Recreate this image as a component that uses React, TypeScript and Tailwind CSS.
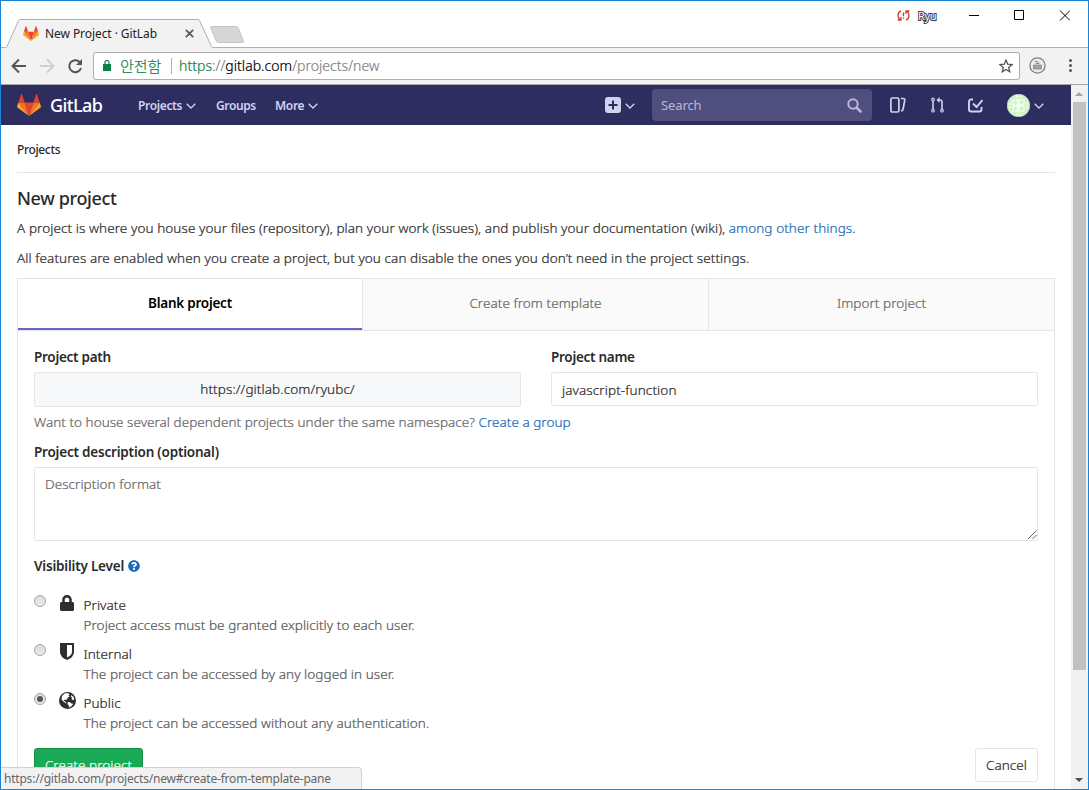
import React from "react";
import { FaLock, FaQuestionCircle } from "react-icons/fa";

function Tanuki({ className }: { className: string }) {
  return (
    <svg className={className} viewBox="0 0 36 33" preserveAspectRatio="none">
      <path fill="#e24329" d="M18 33 11.4 12.7h13.2z" />
      <path fill="#fc6d26" d="M18 33 11.4 12.7H2z" />
      <path fill="#fca326" d="M2 12.7.1 18.8c-.2.6 0 1.2.5 1.5L18 33z" />
      <path fill="#e24329" d="M2 12.7h9.4L7.4.5c-.2-.7-1.1-.7-1.3 0z" />
      <path fill="#fc6d26" d="m18 33 6.6-20.3H34z" />
      <path fill="#fca326" d="m34 12.7 1.9 6.1c.2.6 0 1.2-.5 1.5L18 33z" />
      <path fill="#e24329" d="M34 12.7h-9.4l4-12.2c.2-.7 1.1-.7 1.3 0z" />
    </svg>
  );
}

function Chevron() {
  return (
    <svg className="h-[6px] w-[10px] shrink-0" viewBox="0 0 10 6" fill="none" stroke="#d1d1f0" strokeWidth="1.3">
      <path d="M.7.7 5 5 9.3.7" />
    </svg>
  );
}

function TabStrip() {
  return (
    <div className="relative flex h-[46px] shrink-0 bg-white">
      <svg className="absolute left-0 top-0 h-[47px] w-[1087px]" viewBox="1 1 1087 47">
        <path d="M1 47.5H5.500Q6.500 47.500 7 46.500L18.500 20.500Q19 19.500 20 19.500H198Q199 19.500 199.500 20.500L211.500 46.500Q212 47.500 213 47.500H1088V49H1Z" fill="#f2f2f2" />
        <path d="M1 47.500H5.500Q6.500 47.500 7 46.500L18.500 20.500Q19 19.500 20 19.500H198Q199 19.500 199.500 20.500L211.500 46.500Q212 47.500 213 47.500H1088" fill="none" stroke="#b0b0b0" />
        <path d="M211.500 26.500H236Q237.500 26.500 238.200 28L243.500 41Q244 42.500 242.500 42.500H218.500Q217 42.500 216.400 41.200L210.700 28Q210 26.500 211.500 26.500Z" fill="#d6d6d6" stroke="#c4c4c4" />
      </svg>
      <div className="relative flex w-[210px] items-center pl-[22px] pt-[19px]">
        <Tanuki className="h-[15px] w-[16px]" />
        <span className="ml-[6px] w-[113px] whitespace-nowrap font-['Noto_Sans'] text-[12px] leading-4 tracking-[-.07px] text-[#222]">New Project · GitLab</span>
        <svg className="ml-[27px] size-[9px]" viewBox="0 0 9 9" stroke="#5a5a5a" strokeWidth="1.8"><path d="m.8.8 7.400 7.400M8.200.8.800 8.200" /></svg>
      </div>
      <div className="relative ml-auto flex h-[28px] items-center pr-[18px]">
        <svg className="mr-[-1px] h-[11px] w-[13px]" viewBox="0 0 13 11" fill="none" stroke="#c93a2b" strokeWidth="1.300">
          <path d="M4 .8C.2 2.300.2 7.500 3 9.700M.7 10H4V7M9 10.200c3.800-1.500 3.800-6.700 1-8.900M12.300 1H9v3" />
          <path d="M6.500 2.500v3.800M6.500 7.500v1.300" />
        </svg>
        <span className="ml-[9px] w-[20px] pt-[2px] font-['Noto_Sans'] text-[11px] leading-4 tracking-[-.3px] text-white [-webkit-text-stroke:2px_#444] [paint-order:stroke_fill]">Ryu</span>
        <svg className="ml-[31px] h-[11px] w-[101px]" viewBox="0 0 101 11" fill="none" stroke="#000">
          <path d="M0 5.500h10M45.500.5h9v9h-9zM91 .5l10 10M101 .5l-10 10" />
        </svg>
      </div>
    </div>
  );
}

function Toolbar() {
  return (
    <div className="flex h-[38px] shrink-0 items-center border-b border-[#a6a6a6] bg-[#f2f2f2]">
      <svg className="ml-[10px] h-[18px] w-[74px]" viewBox="0 0 74 18" fill="none" strokeWidth="2">
        <path d="M15 9H2M8 2.500 1.500 9 8 15.500" stroke="#555" />
        <path d="M29 9h13M36 2.500 42.500 9 36 15.500" stroke="#d0d0d0" />
        <path d="M68.800 5.200A6 6 0 1 0 70 11" stroke="#555" />
        <path d="M71 2v6h-6z" fill="#555" />
      </svg>
      <div className="ml-[8px] flex h-[28px] w-[927px] items-center rounded-[3px] border border-[#adadad] bg-white">
        <svg className="ml-[9px] h-[11px] w-[8px]" viewBox="0 0 8 11"><path d="M0 4h8v7H0z" fill="#0b8043" /><path d="M2 4V2.500a2 2 0 0 1 4 0V4" fill="none" stroke="#0b8043" strokeWidth="1.200" /></svg>
        <span className="ml-[9px] w-[42px] whitespace-nowrap font-['Noto_Sans_CJK_KR'] text-[15px] font-light leading-5 text-[#0b8043] [-webkit-text-stroke:.2px]">안전함</span>
        <span className="ml-[9px] h-[16px] w-px bg-[#b0b0b0]" />
        <span className="ml-[7px] whitespace-nowrap font-['Noto_Sans'] text-[14px] font-light leading-5 tracking-[.04px] text-[#808080] [-webkit-text-stroke:.2px]">
          <span className="text-[#0b8043]">https</span>://<span className="text-black">gitlab.com</span>/projects/new
        </span>
        <svg className="ml-auto mr-[6px] size-[14px]" viewBox="0 0 14 14" fill="none" stroke="#555" strokeWidth="1.300"><path d="m7 1 1.700 4.200 4.500.3-3.500 2.900 1.100 4.400L7 10.400l-3.800 2.400 1.100-4.400L.8 5.500l4.500-.3z" /></svg>
      </div>
      <svg className="ml-[9px] size-[17px]" viewBox="0 0 17 17" fill="none" stroke="#808080">
        <circle cx="8.500" cy="8.500" r="7.600" strokeWidth="1.300" fill="#ececec" />
        <path d="M6 4.500h2.500l1 1.500M6.500 6.500h4" strokeWidth=".9" />
        <path d="M4.500 8h8v4h-8z" fill="#a5a5a5" strokeWidth=".7" />
      </svg>
      <svg className="ml-[23px] h-[13px] w-[3px]" viewBox="0 0 3 13" fill="#555"><circle cx="1.500" cy="1.600" r="1.500" /><circle cx="1.500" cy="6.500" r="1.500" /><circle cx="1.500" cy="11.400" r="1.500" /></svg>
    </div>
  );
}

function Navbar() {
  return (
    <nav className="flex h-[40px] shrink-0 items-center bg-[#2e2d60] font-['Noto_Sans'] text-[12px] font-semibold tracking-[-.1px] text-[#d1d1f0]">
      <Tanuki className="ml-[16px] h-[22px] w-[24px]" />
      <span className="ml-[9px] w-[53px] whitespace-nowrap text-[18px] font-medium leading-6 tracking-[-.6px] text-white">GitLab</span>
      <span className="ml-[35px] w-[44px] whitespace-nowrap pt-[2px] tracking-[-.35px]">Projects</span>
      <span className="ml-[4px] flex pt-[1px]"><Chevron /></span>
      <span className="ml-[20px] w-[40px] whitespace-nowrap pt-[2px] tracking-[-.4px]">Groups</span>
      <span className="ml-[19px] w-[30px] whitespace-nowrap pt-[2px] tracking-[-.3px]">More</span>
      <span className="ml-[3px] flex pt-[1px]"><Chevron /></span>
      <div className="ml-auto flex items-center pr-[27px]">
        <svg className="size-[16px]" viewBox="0 0 16 16"><rect width="16" height="16" rx="3" fill="#d1d1f0" /><path d="M8 3.500v9M3.500 8h9" stroke="#2e2d60" strokeWidth="2" /></svg>
        <span className="ml-[4px] mr-[1px] flex pt-[1px]"><Chevron /></span>
        <div className="ml-[16px] flex h-[32px] w-[220px] items-center justify-between rounded-[4px] bg-[#4f4e7d] pl-[9px] pr-[10px] text-[13px] font-normal text-[#b9b8dc]">
          <span className="pt-[2px]">Search</span>
          <svg className="size-[15px]" viewBox="0 0 15 15" fill="none" stroke="#b9b8dc"><circle cx="6" cy="6" r="4.700" strokeWidth="2" /><path d="m9.600 9.600 3.900 3.900" strokeWidth="2.600" strokeLinecap="round" /></svg>
        </div>
        <svg className="ml-[18px] h-[16px] w-[16px]" viewBox="0 0 16 16" fill="none" stroke="#d1d1f0" strokeWidth="1.700">
          <rect x=".9" y="1" width="8" height="14" rx="1.500" />
          <path d="M11 1.500h2.500a1.300 1.300 0 0 1 1.300 1.500L13 12.500q-.3 1.300-2 1.300" />
        </svg>
        <svg className="ml-[25px] h-[16px] w-[13px]" viewBox="0 0 13 16" fill="none" stroke="#d1d1f0" strokeWidth="1.200">
          <circle cx="2" cy="2.500" r="1.300" /><circle cx="2" cy="13.700" r="1.300" /><circle cx="11" cy="13.700" r="1.300" />
          <path d="M2 4v8.500M11 12.500V5q0-2-2-2H7.500" strokeWidth="1.600" /><path d="M8.500 0v6L5.500 3z" fill="#d1d1f0" stroke="none" />
        </svg>
        <svg className="ml-[24px] h-[15px] w-[15px]" viewBox="0 0 15 15" fill="none" stroke="#d1d1f0" strokeWidth="1.900">
          <path d="M5 1.500H3A2 2 0 0 0 1 3.500v8a2 2 0 0 0 2 2h8.500a2 2 0 0 0 2-2V9M5 5.500l3.500 3.500L14.500 2" />
        </svg>
        <svg className="ml-[24px] size-[23px]" viewBox="0 0 23 23">
          <circle cx="11.500" cy="11.500" r="11.300" fill="#cdf6c2" stroke="#d1d1f0" strokeWidth=".7" />
          <path d="M11.500 6v11M6 11.500h11" stroke="#fff" strokeWidth="3" strokeDasharray="2.200 1" />
          <path d="M6 6h11v11H6zM3 9v5M20 9v5M9 2.500h5M9 20.500h5" fill="none" stroke="#f4fef0" strokeWidth="1.800" strokeDasharray="2 1.200" />
        </svg>
        <span className="ml-[4px] flex pt-[1px]"><Chevron /></span>
      </div>
    </nav>
  );
}

function Globe() {
  return (
    <svg className="size-[17px]" viewBox="0 0 17 17">
      <circle cx="8.500" cy="8.500" r="8.500" fill="#2e2e2e" />
      <path d="M5.500 1.500 9 .900l1.500 1.500-1 .8 1.200 1.200-1.700 1.200L7.500 8 5.800 7.500l-1 1.200 2.200 1.300.3 1.500-2.300-1.500L2.500 7.500 3 4zM12.500 3l2 2 .8 2.200-1.300 1-1.500-1.200.5-1.500-1.200-1zM9 10l2 .2 1.500 1.300 1.700.3-1.500 2.200-2.500 1.500-.7-2.500L8.300 12z" fill="#fff" />
    </svg>
  );
}

function Radio({ checked }: { checked?: boolean }) {
  return (
    <span className="flex size-[12px] shrink-0 items-center justify-center rounded-full border border-[#a3a3a3] bg-linear-to-b from-[#dadada] to-[#ededed]">
      {checked && <span className="size-[6px] rounded-full bg-[#555]" />}
    </span>
  );
}

function Level({ icon, name, text, checked }: { icon: React.ReactNode; name: string; text: string; checked?: boolean }) {
  return (
    <div className="flex h-[49px]">
      <Radio checked={checked} />
      <span className="-mt-[1px] ml-[11px] flex h-[17px] w-[20px] shrink-0 items-center justify-center text-[#2e2e2e]">{icon}</span>
      <div className="ml-[6.500px] whitespace-nowrap leading-5">
        <div>{name}</div>
        <div className="text-[#585858]">{text}</div>
      </div>
    </div>
  );
}

function Page() {
  return (
    <main className="flex min-h-0 flex-1 flex-col bg-white px-[16px] font-['Noto_Sans'] text-[13.5px] font-light leading-5 tracking-[.055px] text-[#2a2a2a] [-webkit-text-stroke:.22px]">
      <div className="flex h-[48px] shrink-0 items-center border-b border-[#e5e5e5] pt-[2px] text-[12px] font-medium tracking-[-.35px] [-webkit-text-stroke:0]">Projects</div>
      <h1 className="mt-[13px] h-[24px] shrink-0 text-[18px] font-medium leading-6 tracking-[-.35px] [-webkit-text-stroke:0]">New project</h1>
      <p className="mt-[8px] h-[20px] shrink-0 whitespace-nowrap tracking-[.085px]">
        A project is where you house your files (repository), plan your work (issues), and publish your documentation (wiki), <a className="text-[#1b69b6]">among other things</a>.
      </p>
      <p className="mt-[10px] h-[20px] shrink-0 whitespace-nowrap tracking-[.08px]">
        All features are enabled when you create a project, but you can disable the ones you don’t need in the project settings.
      </p>
      <div className="mt-[10px] flex h-[53px] shrink-0 border border-[#e5e5e5] text-center leading-[49px] text-[#666]">
        <div className="w-[344px] border-b-2 border-[#6666c4] font-semibold tracking-[-.25px] text-black [-webkit-text-stroke:0]">Blank project</div>
        <div className="w-[347px] border-x border-[#e5e5e5] bg-[#fafafa]">Create from template</div>
        <div className="flex-1 bg-[#fafafa]">Import project</div>
      </div>
      <form className="flex flex-1 flex-col border-x border-[#e5e5e5] px-[16px]">
        <div className="flex gap-[30px]">
          <div className="w-[487px]">
            <div className="mt-[16px] font-semibold tracking-[-.28px] [-webkit-text-stroke:0]">Project path</div>
            <div className="mt-[5px] h-[35px] rounded-[2px] border border-[#e5e5e5] bg-[#f7f8fa] text-center leading-[33px] tracking-[.1px]">https://gitlab.com/ryubc/</div>
          </div>
          <div className="w-[487px]">
            <div className="mt-[16px] font-semibold tracking-[-.28px] [-webkit-text-stroke:0]">Project name</div>
            <div className="mt-[5px] h-[34px] rounded-[2px] border border-[#e5e5e5] pl-[10px] leading-[34px] tracking-[.1px]">javascript-function</div>
          </div>
        </div>
        <div className="mt-[5px] whitespace-nowrap tracking-[.03px] text-[#666]">Want to house several dependent projects under the same namespace? <a className="text-[#1b69b6]">Create a group</a></div>
        <div className="mt-[10px] font-semibold tracking-[-.2px] [-webkit-text-stroke:0]">Project description (optional)</div>
        <div className="mt-[5px] flex h-[74px] shrink-0 items-start justify-between rounded-[2px] border border-[#e5e5e5] pl-[10px] pt-[6px] text-[#666]">
          Description format
          <svg className="mt-[56px] size-[9px]" viewBox="0 0 9 9" stroke="#555" strokeWidth=".9"><path d="m0 9 8.500-8.500M4.500 9l4-4" /></svg>
        </div>
        <div className="mt-[15px] flex items-center gap-[4px] font-semibold tracking-[-.2px] [-webkit-text-stroke:0]">Visibility Level <FaQuestionCircle className="size-[12px] text-[#1b69b6]" /></div>
        <div className="mt-[19px]">
          <Level icon={<FaLock className="h-[16px] w-[14px]" />} name="Private" text="Project access must be granted explicitly to each user." />
          <Level icon={<svg className="h-[17px] w-[14px]" viewBox="0 0 14 17"><path d="M0 0h14v9q0 5-7 8-7-3-7-8zM7 2v12.500Q12 12 12 9V2z" fill="#2e2e2e" fillRule="evenodd" /></svg>} name="Internal" text="The project can be accessed by any logged in user." />
          <Level checked icon={<Globe />} name="Public" text="The project can be accessed without any authentication." />
        </div>
        <div className="mt-[6px] flex justify-between">
          <div className="h-[34px] w-[109px] rounded-[3px] border border-[#168f48] bg-[#1aaa55] text-center leading-[33px] text-white">Create project</div>
          <div className="h-[34px] w-[63px] rounded-[3px] border border-[#e5e5e5] text-center leading-[33px]">Cancel</div>
        </div>
      </form>
    </main>
  );
}

export default function App() {
  return (
    <div className="relative flex h-[790px] w-[1089px] flex-col overflow-hidden border border-[#1883d7] bg-white">
      <TabStrip />
      <Toolbar />
      <div className="flex min-h-0 flex-1">
        <div className="flex w-[1070px] flex-col">
          <Navbar />
          <Page />
        </div>
        <div className="flex flex-1 flex-col items-center bg-[#f1f1f1] pr-[1px]">
          <svg className="mt-[7px] h-[4px] w-[8px]" viewBox="0 0 8 4"><path d="M0 4 4 0l4 4z" fill="#a3a3a3" /></svg>
          <div className="mt-[6px] h-[568px] w-[13px] bg-[#c1c1c1]" />
          <svg className="mb-[7px] mt-auto h-[4px] w-[8px]" viewBox="0 0 8 4"><path d="m0 0 4 4 4-4z" fill="#505050" /></svg>
        </div>
      </div>
      <div className="absolute bottom-0 left-0 h-[22px] w-[361px] rounded-tr-[4px] border-r border-t border-[#d2d2d2] bg-[#f2f2f2] pl-[3px] font-['Noto_Sans'] text-[12px] leading-[21px] tracking-[-.21px] text-[#666]">https://gitlab.com/projects/new#create-from-template-pane</div>
    </div>
  );
}
